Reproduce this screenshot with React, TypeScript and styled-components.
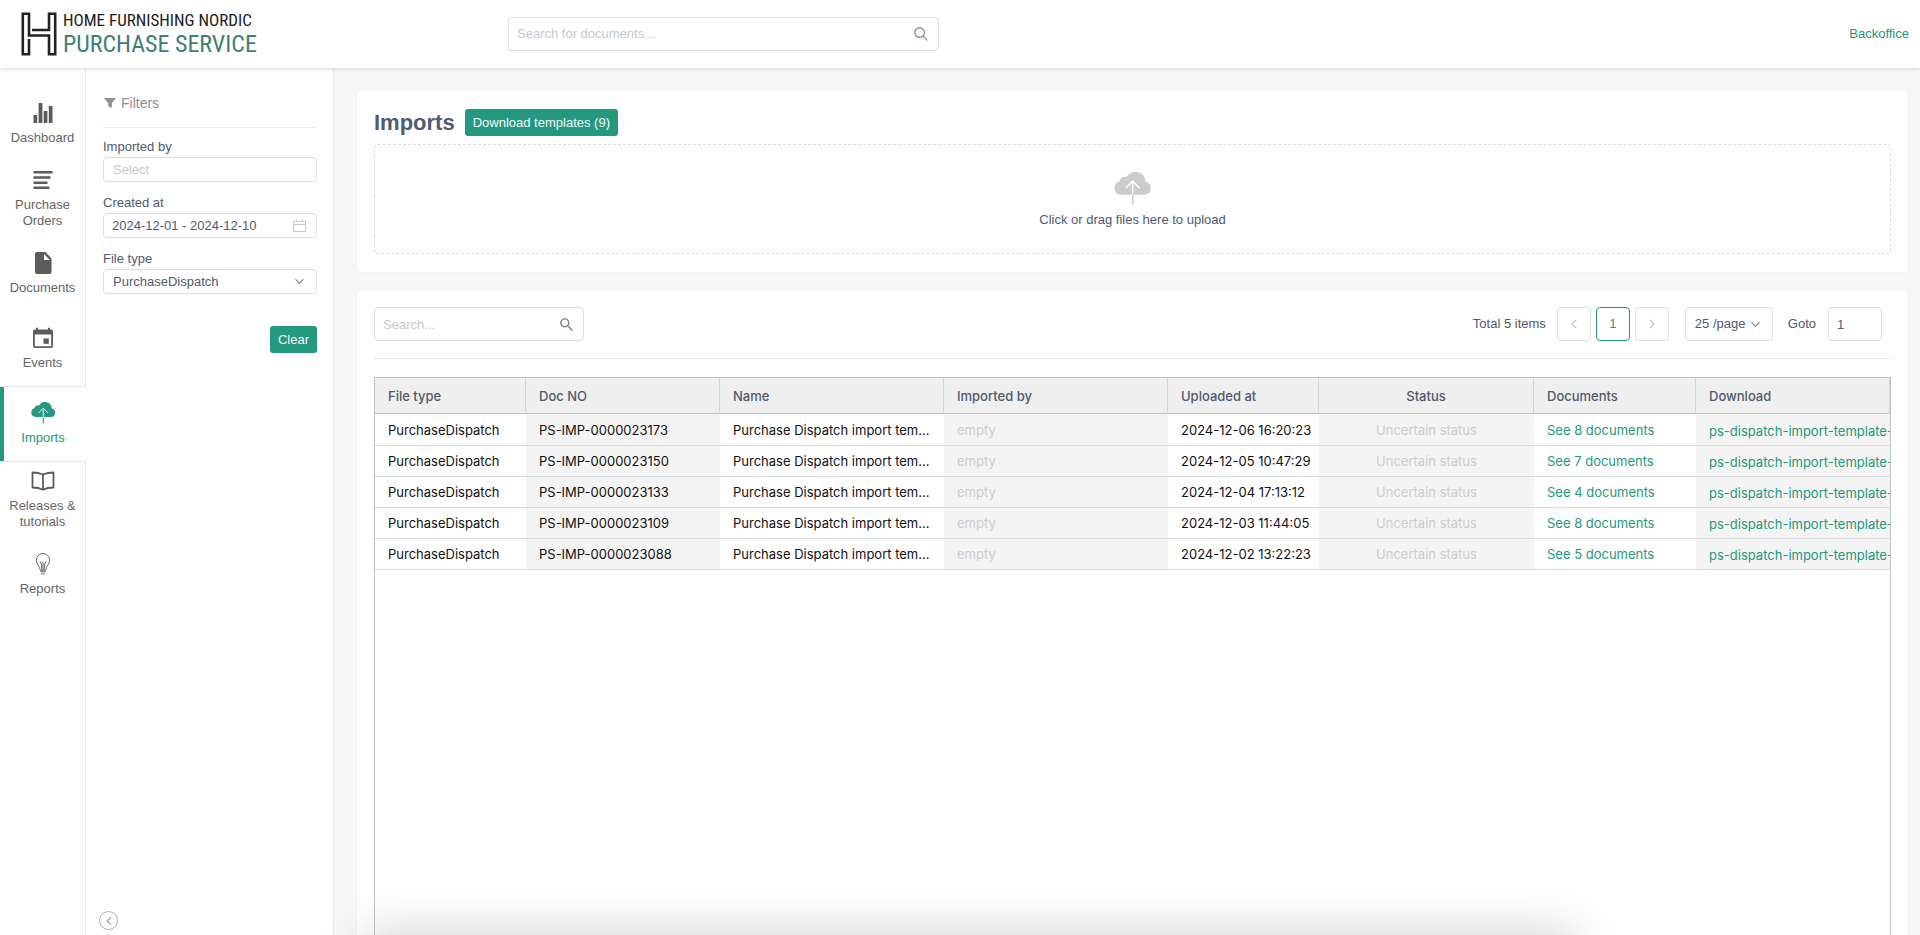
import React from "react";
import styled, { createGlobalStyle, css } from "styled-components";
import {
  IoIosArrowBack,
  IoIosArrowDown,
  IoIosArrowForward,
  IoIosSearch,
  IoMdSearch,
} from "react-icons/io";

const c = {
  green: "#259880",
  text: "#515a6e",
  navText: "#666666",
  navIcon: "#5c5c5c",
  muted: "#c5c8ce",
  line: "#e8eaec",
  control: "#dcdee2",
  grid: "#bdc3c7",
  panel: "#fefefe",
  page: "#f7f7f7",
};

const GlobalStyle = createGlobalStyle`
  *, *::before, *::after { box-sizing: border-box; }
  body {
    margin: 0;
    background: ${c.page};
    color: ${c.text};
    font: 13px/16px "Liberation Sans", Arial, sans-serif;
  }
  button, input, select { font: inherit; color: inherit; margin: 0; }
  a { text-decoration: none; }
`;

const Shell = styled.div`
  display: flex;
  flex-direction: column;
  min-height: 100vh;
`;

const Header = styled.header`
  position: relative;
  display: grid;
  grid-template-columns: 487px 431px 1fr;
  align-items: center;
  height: 68px;
  padding: 0 11px 1px 21px;
  background: ${c.panel};
  box-shadow: 0 1px 4px rgba(0, 0, 0, 0.15);
`;

const Logo = styled.a`
  display: flex;
  align-items: center;
  gap: 6px;
`;

const LogoText = styled.span`
  display: flex;
  flex-direction: column;
  font-family: "Roboto Condensed", Roboto, sans-serif;
  white-space: nowrap;
`;

const LogoTop = styled.span`
  font-size: 17px;
  line-height: 20px;
  color: #1c1c1c;
`;

const LogoBottom = styled.span`
  font-size: 24px;
  line-height: 28px;
  color: #3f7f75;
`;

const HeaderLink = styled.a`
  justify-self: end;
  color: ${c.green};
`;

const Body = styled.div`
  display: flex;
  flex: 1;
`;

const Nav = styled.nav`
  display: flex;
  flex-direction: column;
  flex: none;
  width: 86px;
  background: ${c.panel};

  &::before {
    content: "";
    height: 18px;
    border-right: 1px solid ${c.line};
  }
  &::after {
    content: "";
    flex: 1;
    border-right: 1px solid ${c.line};
  }
`;

const NavItem = styled.a<{ $active?: boolean }>`
  display: flex;
  flex-direction: column;
  align-items: center;
  justify-content: center;
  gap: 6px;
  height: 75px;
  padding: 0 6px;
  border-right: 1px solid ${c.line};
  color: ${c.navText};
  text-align: center;

  svg {
    display: block;
    height: 22px;
    color: ${c.navIcon};
  }

  ${(p) =>
    p.$active &&
    css`
      height: 76px;
      border: solid ${c.line};
      border-width: 1px 0;
      box-shadow: inset 4px 0 ${c.green};
      color: ${c.green};
      svg {
        color: ${c.green};
      }
    `}
`;

const Filters = styled.aside`
  display: flex;
  flex-direction: column;
  flex: none;
  width: 248px;
  padding: 27px 16px 5px 17px;
  border-right: 1px solid ${c.line};
  background: ${c.panel};
`;

const FiltersTitle = styled.h2`
  display: flex;
  align-items: center;
  gap: 4px;
  margin: 0 0 11px;
  padding-bottom: 16px;
  border-bottom: 1px solid ${c.line};
  color: #8f8f8f;
  font-size: 14px;
  font-weight: 400;
  line-height: 16px;
`;

const Field = styled.div`
  display: flex;
  flex-direction: column;
  gap: 2px;
  margin-bottom: 13px;
`;

const FieldLabel = styled.label`
  line-height: 16px;
`;

const Control = styled.div<{ $tall?: boolean; $width?: string }>`
  display: flex;
  align-items: center;
  width: ${(p) => p.$width ?? "100%"};
  height: ${(p) => (p.$tall ? 34 : 25)}px;
  padding-right: ${(p) => (p.$tall ? 8 : 10)}px;
  border: 1px solid ${c.control};
  border-radius: 4px;
  background: #ffffff;

  svg {
    flex: none;
    color: #808695;
  }
`;

const TextInput = styled.input<{ $pad?: number }>`
  flex: 1;
  min-width: 0;
  height: 100%;
  padding: 0 0 0 ${(p) => p.$pad ?? 8}px;
  border: 0;
  outline: 0;
  background: none;

  &::placeholder {
    color: ${c.muted};
    opacity: 1;
  }
`;

const SelectBox = styled.div<{ $tall?: boolean; $width?: string }>`
  display: grid;
  align-items: center;
  width: ${(p) => p.$width ?? "100%"};
  height: ${(p) => (p.$tall ? 34 : 25)}px;
  border: 1px solid ${c.control};
  border-radius: 4px;
  background: #ffffff;

  select {
    grid-area: 1 / 1;
    width: 100%;
    height: 100%;
    padding: 0 24px 0 9px;
    border: 0;
    outline: 0;
    appearance: none;
    background: none;
  }
  svg {
    grid-area: 1 / 1;
    justify-self: end;
    margin-right: 10px;
    color: #808695;
    pointer-events: none;
  }
`;

const Button = styled.button`
  height: 27px;
  padding: 0 8px;
  border: 0;
  border-radius: 3px;
  background: ${c.green};
  color: #f4fbf9;
  cursor: pointer;
`;

const ClearButton = styled(Button)`
  align-self: flex-end;
  margin-top: 19px;
`;

const CollapseButton = styled.button`
  display: grid;
  place-items: center;
  width: 19px;
  height: 19px;
  margin: auto 0 0 -4px;
  padding: 0;
  border: 1px solid #b0b0b0;
  border-radius: 50%;
  background: none;
  color: #999999;
`;

const Main = styled.main`
  display: flex;
  flex-direction: column;
  flex: 1;
  gap: 18px;
  min-width: 0;
  padding: 22px 12px 0 23px;
`;

const Card = styled.section<{ $fill?: boolean }>`
  padding: ${(p) => (p.$fill ? "17px 17px 0" : "19px 17px 18px")};
  border-radius: 4px;
  background: ${c.panel};
  box-shadow: 0 0 2px rgba(0, 0, 0, 0.07);

  ${(p) =>
    p.$fill &&
    css`
      display: flex;
      flex-direction: column;
      flex: 1;
      border-radius: 4px 4px 0 0;
    `}
`;

const TitleRow = styled.div`
  display: flex;
  align-items: center;
  gap: 10px;
  margin-bottom: 8px;
`;

const Title = styled.h1`
  margin: 0;
  font-size: 22px;
  line-height: 26px;
`;

const DropZone = styled.label`
  display: flex;
  flex-direction: column;
  align-items: center;
  justify-content: center;
  gap: 7px;
  height: 110px;
  padding-top: 2px;
  border: 1px dashed ${c.control};
  border-radius: 4px;
  cursor: pointer;

  svg {
    color: #cccccc;
  }
  input {
    position: absolute;
    width: 1px;
    height: 1px;
    opacity: 0;
    appearance: none;
  }
`;

const Toolbar = styled.div`
  display: flex;
  align-items: center;
  justify-content: space-between;
  padding-bottom: 17px;
  border-bottom: 1px solid ${c.line};
`;

const Pager = styled.div`
  display: flex;
  align-items: center;
  gap: 5px;
  padding-right: 9px;
`;

const PagerText = styled.span`
  margin-right: 6px;
`;

const PageButton = styled.button<{ $current?: boolean }>`
  display: grid;
  place-items: center;
  width: 34px;
  height: 34px;
  padding: 0;
  border: 1px solid ${(p) => (p.$current ? c.green : c.control)};
  border-radius: 4px;
  background: #ffffff;
  color: ${(p) => (p.$current ? c.green : c.muted)};
`;

const PagerExtras = styled.div`
  display: flex;
  align-items: center;
  gap: 15px;
  margin-left: 11px;
`;

const Goto = styled.div`
  display: flex;
  align-items: center;
  gap: 12px;
`;

const Grid = styled.div`
  flex: 1;
  margin-top: 18px;
  border: solid ${c.grid};
  border-width: 1px 1px 0;
  background: ${c.panel};
`;

const Table = styled.table`
  width: 100%;
  table-layout: fixed;
  border-collapse: separate;
  border-spacing: 0;
  font-family: Inter, sans-serif;
`;

const Th = styled.th<{ $center?: boolean }>`
  height: 36px;
  padding: 0 13px;
  border-right: 1px solid #d3d6da;
  border-bottom: 1px solid ${c.grid};
  background: #efefef;
  font-weight: 500;
  text-align: ${(p) => (p.$center ? "center" : "left")};
`;

const Td = styled.td<{ $center?: boolean; $muted?: boolean }>`
  height: 31px;
  padding: 0 0 0 ${(p) => (p.$center ? 0 : 13)}px;
  border-bottom: 1px solid #d9dcde;
  color: ${(p) => (p.$muted ? "#cccccc" : "#111111")};
  text-align: ${(p) => (p.$center ? "center" : "left")};
  white-space: nowrap;
  overflow: hidden;

  tr:first-child > & {
    height: 32px;
  }
  &:nth-child(even) {
    background: #f4f4f4;
  }
  &:last-child {
    padding-top: 2px;
  }
  a {
    color: ${c.green};
  }
`;

/* Soft shade along the bottom edge of the window. */
const BottomShade = styled.div`
  position: fixed;
  bottom: -40px;
  left: 364px;
  right: 344px;
  height: 40px;
  border-radius: 16px;
  box-shadow: 0 0 48px rgba(0, 0, 0, 0.2);
  pointer-events: none;
`;

const LogoMark = () => (
  <svg width="36" height="44" viewBox="0 0 36 44" fill="none" stroke="#222" strokeWidth="2.6" aria-hidden>
    <path d="M8 27V42.2H1.8V1.8H8V23.5H28V42.2H34.2V1.8H28V18H11" />
  </svg>
);

const CloudUploadIcon = ({ width, height }: { width: number; height: number }) => (
  <svg width={width} height={height} viewBox="0 0 38 33" fill="none" aria-hidden>
    <path
      fill="currentColor"
      d="M6.800 22.700A6.800 6.800 0 0 1 5.300 9.400A5.700 5.700 0 0 1 12.500 5A10.200 10.200 0 0 1 31.600 9.600A6.700 6.700 0 0 1 31 22.700Z"
    />
    <path stroke="#fff" strokeWidth="1.400" d="M11.700 16.200 18.700 9l7 7.200M18.700 9.200v13.500" />
    <path stroke="currentColor" strokeWidth="1.500" d="M18.700 22.700v10" />
  </svg>
);

const StatsIcon = () => (
  <svg width="20" height="22" viewBox="0 0 20 22" fill="currentColor" aria-hidden>
    <path d="M.5 13h3.700v8H.5zM5.600 1h3.800v20H5.600zM10.700 9h3.700v12h-3.700zM15.800 4h3.700v17h-3.700z" />
  </svg>
);

const LinesIcon = () => (
  <svg width="20" height="22" viewBox="0 0 20 22" fill="currentColor" aria-hidden>
    <path d="M.5 2h19v2.500H.5zM.5 7.300h17v2.400H.5zM.5 12.500h14v2.400H.5zM.5 17.500h16V20H.5z" />
  </svg>
);

const DocumentIcon = () => (
  <svg width="18" height="22" viewBox="0 0 18 22" aria-hidden>
    <path fill="currentColor" fillRule="evenodd" d="M3 0h8.500L17.500 6.500V20a2 2 0 0 1-2 2H3a2 2 0 0 1-2-2V2a2 2 0 0 1 2-2zm7 2v6h6z" />
  </svg>
);

const EventIcon = () => (
  <svg width="22" height="22" viewBox="0 0 22 22" aria-hidden>
    <path fill="currentColor" fillRule="evenodd" d="M4 .8h2V2.500h10V.8h2v1.700h1A2 2 0 0 1 21 4.500V19a2 2 0 0 1-2 2H3a2 2 0 0 1-2-2V4.500a2 2 0 0 1 2-2h1zM2.800 7.500v11.700h16.400V7.500z" />
    <path fill="currentColor" d="M11.500 11.500h5.300v5.300h-5.300z" />
  </svg>
);

const BookIcon = () => (
  <svg width="24" height="22" viewBox="0 0 24 22" fill="none" stroke="currentColor" strokeWidth="1.800" strokeLinejoin="round" aria-hidden>
    <path d="M12 4.500C9 3.200 5 2.500 1.500 2.500v15c3.500 0 7.500.7 10.500 2.200 3-1.500 7-2.200 10.500-2.200v-15C19 2.500 15 3.200 12 4.500zM12 4.500v15" />
  </svg>
);

const BulbIcon = () => (
  <svg width="16" height="22" viewBox="0 0 16 24" fill="none" stroke="currentColor" strokeWidth="1" strokeLinecap="round" strokeLinejoin="round" aria-hidden>
    <path d="M5 18.500C5 14.500.7 12.500.7 7.800a7.300 7.300 0 0 1 14.600 0C15.300 12.500 11 14.500 11 18.500zM5.500 20.500h5M6.500 22.700h3M6.800 18 6.200 12 4.800 9.500M9.200 18l.6-6 1.400-2.500M8 10v8" />
  </svg>
);

const FunnelIcon = () => (
  <svg width="14" height="12" viewBox="0 0 14 12" fill="currentColor" aria-hidden>
    <path d="M.8 1h12.400L8.800 6v5L5.200 9.200V6z" />
  </svg>
);

const CalendarIcon = () => (
  <svg width="13" height="13" viewBox="0 0 13 13" fill="none" stroke="#c5c8ce" aria-hidden>
    <path d="M.5 2.500h12v10H.5zM.5 5.500h12M3.500.5v2M9.500.5v2" />
  </svg>
);

const navItems = [
  { label: "Dashboard", icon: <StatsIcon /> },
  { label: "Purchase Orders", icon: <LinesIcon /> },
  { label: "Documents", icon: <DocumentIcon /> },
  { label: "Events", icon: <EventIcon /> },
  { label: "Imports", icon: <CloudUploadIcon width={25} height={22} />, active: true },
  { label: "Releases & tutorials", icon: <BookIcon /> },
  { label: "Reports", icon: <BulbIcon /> },
];

const columns = [
  { title: "File type", width: 151 },
  { title: "Doc NO", width: 194 },
  { title: "Name", width: 224 },
  { title: "Imported by", width: 224 },
  { title: "Uploaded at", width: 151 },
  { title: "Status", width: 215, center: true },
  { title: "Documents", width: 162 },
  { title: "Download" },
];

const rows = [
  { no: "PS-IMP-0000023173", at: "2024-12-06 16:20:23", docs: 8 },
  { no: "PS-IMP-0000023150", at: "2024-12-05 10:47:29", docs: 7 },
  { no: "PS-IMP-0000023133", at: "2024-12-04 17:13:12", docs: 4 },
  { no: "PS-IMP-0000023109", at: "2024-12-03 11:44:05", docs: 8 },
  { no: "PS-IMP-0000023088", at: "2024-12-02 13:22:23", docs: 5 },
];

export default function App() {
  return (
    <Shell>
      <GlobalStyle />
      <Header>
        <Logo href="#">
          <LogoMark />
          <LogoText>
            <LogoTop>HOME FURNISHING NORDIC</LogoTop>
            <LogoBottom>PURCHASE SERVICE</LogoBottom>
          </LogoText>
        </Logo>
        <Control $tall>
          <TextInput type="search" aria-label="Search for documents" placeholder="Search for documents..." />
          <IoIosSearch size={18} />
        </Control>
        <HeaderLink href="#">Backoffice</HeaderLink>
      </Header>

      <Body>
        <Nav>
          {navItems.map((item) => (
            <NavItem key={item.label} href="#" $active={item.active}>
              {item.icon}
              <span>{item.label}</span>
            </NavItem>
          ))}
        </Nav>

        <Filters>
          <FiltersTitle>
            <FunnelIcon />
            Filters
          </FiltersTitle>
          <Field>
            <FieldLabel htmlFor="imported-by">Imported by</FieldLabel>
            <Control>
              <TextInput id="imported-by" $pad={9} placeholder="Select" />
            </Control>
          </Field>
          <Field>
            <FieldLabel htmlFor="created-at">Created at</FieldLabel>
            <Control>
              <TextInput id="created-at" defaultValue="2024-12-01 - 2024-12-10" />
              <CalendarIcon />
            </Control>
          </Field>
          <Field>
            <FieldLabel htmlFor="file-type">File type</FieldLabel>
            <SelectBox>
              <select id="file-type">
                <option>PurchaseDispatch</option>
              </select>
              <IoIosArrowDown size={13} />
            </SelectBox>
          </Field>
          <ClearButton type="button">Clear</ClearButton>
          <CollapseButton type="button" aria-label="Collapse filters">
            <IoIosArrowBack size={12} />
          </CollapseButton>
        </Filters>

        <Main>
          <Card>
            <TitleRow>
              <Title>Imports</Title>
              <Button type="button">Download templates (9)</Button>
            </TitleRow>
            <DropZone>
              <CloudUploadIcon width={38} height={33} />
              <span>Click or drag files here to upload</span>
              <input type="file" multiple />
            </DropZone>
          </Card>

          <Card $fill>
            <Toolbar>
              <Control $tall $width="210px">
                <TextInput type="search" aria-label="Search imports" placeholder="Search..." />
                <IoMdSearch size={17} />
              </Control>
              <Pager>
                <PagerText>Total 5 items</PagerText>
                <PageButton type="button" aria-label="Previous page">
                  <IoIosArrowBack size={14} />
                </PageButton>
                <PageButton type="button" $current>
                  1
                </PageButton>
                <PageButton type="button" aria-label="Next page">
                  <IoIosArrowForward size={14} />
                </PageButton>
                <PagerExtras>
                  <SelectBox $tall $width="88px">
                    <select aria-label="Items per page">
                      <option>25 /page</option>
                    </select>
                    <IoIosArrowDown size={13} />
                  </SelectBox>
                  <Goto>
                    <label htmlFor="goto">Goto</label>
                    <Control $tall $width="54px">
                      <TextInput id="goto" defaultValue="1" />
                    </Control>
                  </Goto>
                </PagerExtras>
              </Pager>
            </Toolbar>

            <Grid>
              <Table>
                <colgroup>
                  {columns.map((col) => (
                    <col key={col.title} width={col.width} />
                  ))}
                </colgroup>
                <thead>
                  <tr>
                    {columns.map((col) => (
                      <Th key={col.title} scope="col" $center={col.center}>
                        {col.title}
                      </Th>
                    ))}
                  </tr>
                </thead>
                <tbody>
                  {rows.map((row) => (
                    <tr key={row.no}>
                      <Td>PurchaseDispatch</Td>
                      <Td>{row.no}</Td>
                      <Td>Purchase Dispatch import tem...</Td>
                      <Td $muted>empty</Td>
                      <Td>{row.at}</Td>
                      <Td $center $muted>
                        Uncertain status
                      </Td>
                      <Td>
                        <a href="#">See {row.docs} documents</a>
                      </Td>
                      <Td>
                        <a href="#">ps-dispatch-import-template-</a>
                      </Td>
                    </tr>
                  ))}
                </tbody>
              </Table>
            </Grid>
          </Card>
        </Main>
      </Body>
      <BottomShade />
    </Shell>
  );
}
